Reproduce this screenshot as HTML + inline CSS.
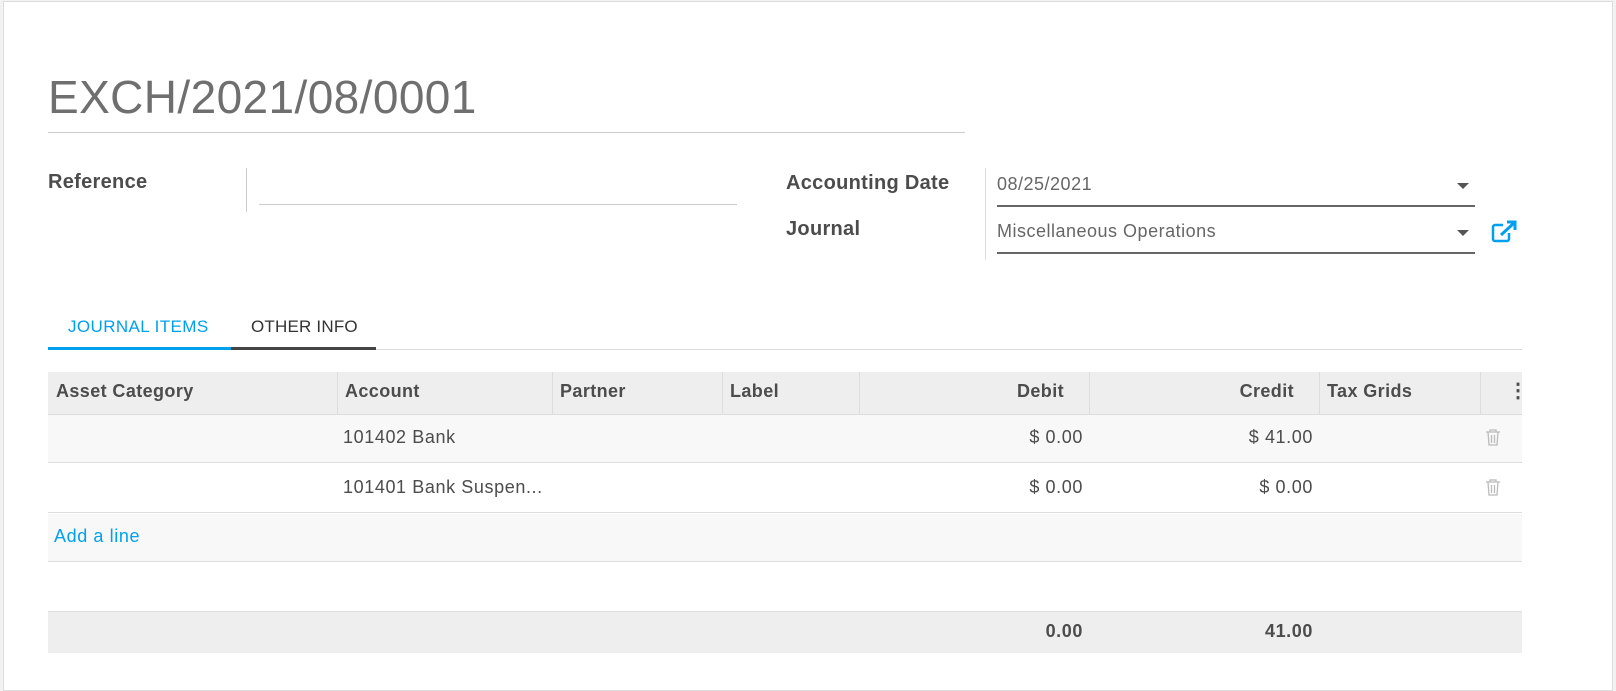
<!DOCTYPE html>
<html><head><style>
*{box-sizing:border-box;margin:0;padding:0}
body{width:1616px;height:684px;background:#f2f2f2;font-family:"Liberation Sans",sans-serif;position:relative;overflow:hidden;color:#4c4c4c}
.sheet{position:absolute;left:3px;top:1px;width:1610px;height:690px;background:#fff;border:1px solid #ddd}
.a{position:absolute;white-space:nowrap}
.lbl{font-size:20px;font-weight:bold;color:#4c4c4c;letter-spacing:0.3px}
.th{font-size:18px;font-weight:bold;color:#4c4c4c;position:absolute;top:381px;letter-spacing:0.4px;white-space:nowrap}
.td{font-size:18px;color:#4c4c4c;position:absolute;letter-spacing:0.6px;white-space:nowrap}
.r{text-align:right}
</style></head><body>
<div class="sheet"></div>
<div class="a" style="left:48px;top:70px;font-size:46px;color:#6f6f6f;letter-spacing:0.4px">EXCH/2021/08/0001</div>
<div class="a" style="left:48px;top:132px;width:917px;height:1px;background:#ccc"></div>

<div class="a lbl" style="left:48px;top:171px">Reference</div>
<div class="a" style="left:246px;top:168px;width:1px;height:44px;background:#ccc"></div>
<div class="a" style="left:259px;top:204px;width:478px;height:1px;background:#ccc"></div>

<div class="a lbl" style="left:786px;top:172px">Accounting Date</div>
<div class="a lbl" style="left:786px;top:218px">Journal</div>
<div class="a" style="left:985px;top:168px;width:1px;height:92px;background:#ddd"></div>
<div class="a" style="left:997px;top:174px;font-size:18px;color:#666;letter-spacing:0.5px">08/25/2021</div>
<div class="a" style="left:997px;top:221px;font-size:18px;color:#666;letter-spacing:0.5px">Miscellaneous Operations</div>
<div class="a" style="left:997px;top:205px;width:478px;height:2px;background:#666"></div>
<div class="a" style="left:997px;top:252px;width:478px;height:2px;background:#666"></div>
<div class="a" style="left:1457px;top:183px;border-left:6px solid transparent;border-right:6px solid transparent;border-top:6px solid #555"></div>
<div class="a" style="left:1457px;top:230px;border-left:6px solid transparent;border-right:6px solid transparent;border-top:6px solid #555"></div>
<svg class="a" style="left:1490px;top:220px" width="28" height="24" viewBox="0 0 28 24"><path d="M13 5H5a2 2 0 0 0-2 2v12a2 2 0 0 0 2 2h12a2 2 0 0 0 2-2v-6" fill="none" stroke="#00a0ef" stroke-width="2.5"/><path d="M11 15L24 3M17 2h8v8" fill="none" stroke="#00a0ef" stroke-width="3"/></svg>

<div class="a" style="left:68px;top:317px;font-size:17px;color:#00a0ef;letter-spacing:0.4px">JOURNAL ITEMS</div>
<div class="a" style="left:251px;top:317px;font-size:17px;color:#333;letter-spacing:0.2px">OTHER INFO</div>
<div class="a" style="left:48px;top:349px;width:1474px;height:1px;background:#ddd"></div>
<div class="a" style="left:48px;top:347px;width:183px;height:3px;background:#00a0ef"></div>
<div class="a" style="left:231px;top:347px;width:145px;height:3px;background:#444"></div>

<div class="a" style="left:48px;top:372px;width:1474px;height:43px;background:#eee;border-bottom:1px solid #ddd"></div>
<div class="a" style="left:337px;top:372px;width:1px;height:43px;background:#ddd"></div>
<div class="a" style="left:552px;top:372px;width:1px;height:43px;background:#ddd"></div>
<div class="a" style="left:722px;top:372px;width:1px;height:43px;background:#ddd"></div>
<div class="a" style="left:859px;top:372px;width:1px;height:43px;background:#ddd"></div>
<div class="a" style="left:1089px;top:372px;width:1px;height:43px;background:#ddd"></div>
<div class="a" style="left:1319px;top:372px;width:1px;height:43px;background:#ddd"></div>
<div class="a" style="left:1480px;top:372px;width:1px;height:43px;background:#ddd"></div>
<div class="th" style="left:56px">Asset Category</div>
<div class="th" style="left:345px">Account</div>
<div class="th" style="left:560px">Partner</div>
<div class="th" style="left:730px">Label</div>
<div class="th r" style="left:900px;width:164px">Debit</div>
<div class="th r" style="left:1130px;width:164px">Credit</div>
<div class="th" style="left:1327px">Tax Grids</div>
<div class="th" style="left:1508px;font-size:20px;top:378px">&#8942;</div>

<div class="a" style="left:48px;top:415px;width:1474px;height:48px;background:#f8f8f8;border-bottom:1px solid #ddd"></div>
<div class="a" style="left:48px;top:464px;width:1474px;height:49px;border-bottom:1px solid #ddd"></div>
<div class="td" style="left:343px;top:427px">101402 Bank</div>
<div class="td r" style="left:900px;width:183px;top:427px">$ 0.00</div>
<div class="td r" style="left:1130px;width:183px;top:427px">$ 41.00</div>
<div class="td" style="left:343px;top:477px">101401 Bank Suspen...</div>
<div class="td r" style="left:900px;width:183px;top:477px">$ 0.00</div>
<div class="td r" style="left:1130px;width:183px;top:477px">$ 0.00</div>
<svg class="a" style="left:1485px;top:428px" width="16" height="18" viewBox="0 0 16 18"><path d="M1 4h14M5 4V2h6v2M3 4l1 13h8l1-13M6.5 7v8M9.5 7v8" fill="none" stroke="#bbb" stroke-width="1.3"/></svg>
<svg class="a" style="left:1485px;top:478px" width="16" height="18" viewBox="0 0 16 18"><path d="M1 4h14M5 4V2h6v2M3 4l1 13h8l1-13M6.5 7v8M9.5 7v8" fill="none" stroke="#bbb" stroke-width="1.3"/></svg>

<div class="a" style="left:48px;top:514px;width:1474px;height:48px;background:#f8f8f8;border-bottom:1px solid #ddd"></div>
<div class="td" style="left:54px;top:526px;color:#00a0ef">Add a line</div>

<div class="a" style="left:48px;top:611px;width:1474px;height:42px;background:#eee;border-top:1px solid #ddd"></div>
<div class="td r" style="left:900px;width:183px;top:621px;font-weight:bold">0.00</div>
<div class="td r" style="left:1130px;width:183px;top:621px;font-weight:bold">41.00</div>
</body></html>
